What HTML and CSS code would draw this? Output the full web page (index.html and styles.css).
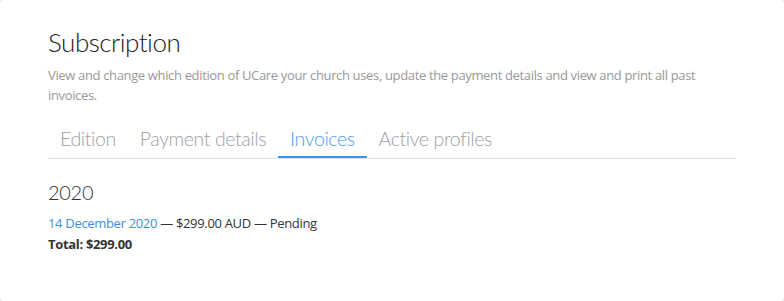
FILE: index.html
```html
<!DOCTYPE html>
<html lang="en">
<head>
    <meta charset="UTF-8">
    <meta name="viewport" content="width=device-width, initial-scale=1.0">
    <title>Subscription</title>
    <link rel="stylesheet" href="styles.css">
</head>
<body>
    <div class="card">
        <h1>Subscription</h1>
        <p class="intro">View and change which edition of UCare your church uses, update the payment details and view and print all past invoices.</p>

        <ul class="tabs">
            <li><a href="#">Edition</a></li>
            <li><a href="#">Payment details</a></li>
            <li class="active"><a href="#">Invoices</a></li>
            <li><a href="#">Active profiles</a></li>
        </ul>

        <div class="invoices">
            <h2>2020</h2>
            <div class="invoice-row">
                <a href="#">14 December 2020</a> &mdash; $299.00 AUD &mdash; Pending
            </div>
            <div class="invoice-total">Total: $299.00</div>
        </div>
    </div>
</body>
</html>
```

FILE: styles.css
```css
body {
    font-family: "Open Sans", "Noto Sans", sans-serif;
    background-color: #e9e9e9;
    margin: 0;
    color: #333;
}

.card {
    background-color: #fff;
    border-radius: 4px;
    min-height: 100vh;
    box-sizing: border-box;
    padding: 25px 48px;
}

h1 {
    font-family: Lato, "Open Sans", sans-serif;
    font-size: 26px;
    font-weight: 300;
    letter-spacing: -0.5px;
    margin: 0;
    line-height: 34px;
    color: #222;
}

.intro {
    font-size: 13px;
    line-height: 20px;
    letter-spacing: -0.35px;
    color: #999;
    margin: 6px 0 17px;
}

.tabs {
    list-style: none;
    margin: 0;
    padding: 0;
    display: flex;
    border-bottom: 1px solid #e2e2e2;
}

.tabs li a {
    display: block;
    padding: 3px 12px 3px;
    font-family: Lato, "Open Sans", sans-serif;
    font-size: 19.5px;
    font-weight: 300;
    letter-spacing: -0.4px;
    line-height: 28px;
    color: #a0a0a0;
    text-decoration: none;
    border-bottom: 2px solid transparent;
}

.tabs li.active a {
    color: #4c9cf0;
    border-bottom-color: #3c96f0;
}

.invoices {
    padding-top: 19px;
}

h2 {
    font-family: Lato, "Open Sans", sans-serif;
    font-size: 20px;
    font-weight: 300;
    letter-spacing: -0.3px;
    line-height: 28px;
    margin: 0 0 7px;
    color: #333;
}

.invoice-row,
.invoice-total {
    font-size: 13px;
    line-height: 21px;
    letter-spacing: -0.32px;
}

.invoice-row a {
    color: #3d8fe0;
    text-decoration: none;
}

.invoice-total {
    font-weight: bold;
}
```
